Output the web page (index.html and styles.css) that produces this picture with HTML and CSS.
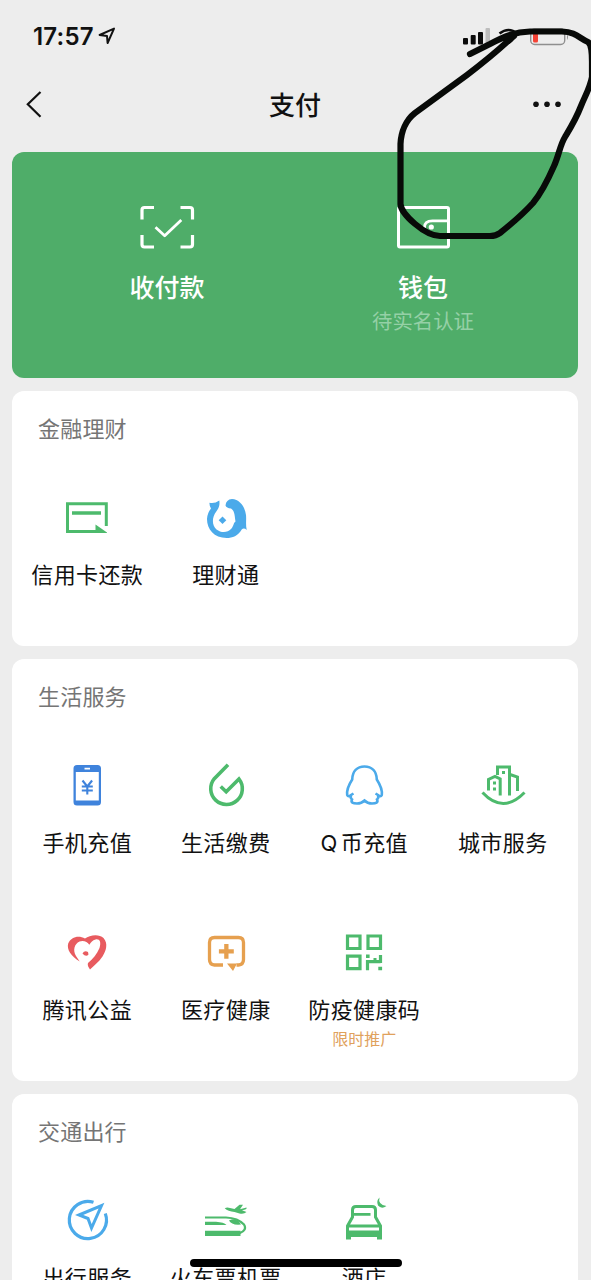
FILE: index.html
```html
<!DOCTYPE html>
<html lang="zh-CN">
<head>
<meta charset="utf-8">
<title>支付</title>
<link rel="stylesheet" href="styles.css">
</head>
<body>
<div class="screen">
  <header class="status">
    <div class="clock">17:57
      <svg class="locate" width="18" height="18" viewBox="0 0 18 18"><path d="M1.600 8 16 1.600 9.600 16 9 9z"/></svg>
    </div>
    <svg class="system" width="112" height="24" viewBox="0 0 112 24">
      <g fill="#0b0b0b"><rect x="3" y="13" width="5" height="6.500" rx="1"/><rect x="10.700" y="10" width="5" height="9.500" rx="1"/><rect x="18" y="7" width="5" height="12.500" rx="1"/></g>
      <rect x="25.500" y="3" width="4.500" height="16.500" rx="1" fill="#bdbdbd"/>
      <g fill="none" stroke="#0b0b0b" stroke-width="2.600"><path d="M39.500 8.500q9-7 18 0M43 13q6-5 12 0"/></g>
      <path d="m49.500 19-3.500-3.500q4-3 7.500 0z"/>
      <rect x="70.700" y="4" width="34" height="15.500" rx="4" fill="none" stroke="#8f8f8f" stroke-width="1.400"/>
      <rect x="73" y="6.500" width="5" height="11" rx="1.500" fill="#f44336"/>
      <path d="M107 9q2 3 0 6z" fill="#8f8f8f"/>
    </svg>
  </header>
  <nav class="nav">
    <svg width="40" height="40" viewBox="0 0 40 40"><path d="M27.500 7 14.800 19.200 27.500 31.700" fill="none" stroke="#111" stroke-width="2.200"/></svg>
    <h1 class="nav-title">支付</h1>
    <svg width="40" height="40" viewBox="0 0 40 40" fill="#111"><circle cx="9" cy="19.300" r="2.800"/><circle cx="20" cy="19.300" r="2.800"/><circle cx="31" cy="19.300" r="2.800"/></svg>
  </nav>

  <main class="content">
    <section class="pay">
      <div class="pay-item">
        <svg width="60" height="50" viewBox="0 0 60 50" fill="none" stroke="#fff" stroke-width="3.200">
          <path d="M5 17.500V8q0-2.500 2.500-2.500H17M43.500 5.500H53q2.500 0 2.500 2.500v9.500M55.500 33v9.500q0 2.500-2.500 2.500h-9.500M17 45H7.500Q5 45 5 42.500V33"/>
          <path d="m18.500 25.300 9.200 8.500L44.300 18" stroke-linejoin="round" stroke-width="2.800"/>
        </svg>
        <div class="pay-label">收付款</div>
      </div>
      <div class="pay-item">
        <svg width="60" height="50" viewBox="0 0 60 50" fill="none" stroke="#fff" stroke-width="3">
          <rect x="5.500" y="5.500" width="50" height="39.500" rx="1.500"/>
          <path d="M55 18.800H39.500q-8 0-8 6.500t8 7h15" stroke-width="2.800"/><circle cx="38.300" cy="25" r="2.600" fill="#fff" stroke="none"/>
        </svg>
        <div class="pay-label">钱包</div>
        <div class="pay-note">待实名认证</div>
      </div>
    </section>

    <section class="card">
      <h2 class="card-title">金融理财</h2>
      <div class="grid">
        <div class="tile">
          <svg class="icon green" viewBox="0 0 60 60">
            <path class="line" d="M49.300 37V14.800H10.500v27.700h30" stroke-width="3"/>
            <path d="M15 22.200h29v3.600H15zM38.500 35.500 50 43.500v.5H38.500z"/>
          </svg>
          <div class="label">信用卡还款</div>
        </div>
        <div class="tile">
          <svg class="icon sky" viewBox="0 0 60 60">
            <path d="M13.500 13.800Q18.500 15 23.300 11.500C24 16 22.800 19 20.300 22.500C15.500 29 16 36 20.500 40.500C25 44 31.500 44 35 40C38 37 37 34.500 39.500 32.500C38.500 25 38.500 22 35 19.500Q30.500 19 29.500 16.500Q30 10.500 36 10C44 10.500 49 18 50 26C50.500 31 49.500 35 50.700 41Q48 38.500 45.700 40.500C42 47 36.500 49 30.700 49C18 49 11 40 11 30Q11.300 24 15 19.500Q13.300 17 13.500 13.800z"/>
            <path d="m26.500 27.500 3.800 3.800-3.800 3.800-3.800-3.800z"/>
          </svg>
          <div class="label">理财通</div>
        </div>
      </div>
    </section>

    <section class="card services">
      <h2 class="card-title">生活服务</h2>
      <div class="grid">
        <div class="tile">
          <svg class="icon blue" viewBox="0 1 60 60">
            <path fill-rule="evenodd" d="M20 9h20.500q3.500 0 3.500 3.500V46q0 3.500-3.500 3.500H20q-3.500 0-3.500-3.500V12.500Q16.500 9 20 9zm-1.200 7v28.500h23V16zm8.700-4.200v1.700h5.500v-1.700z"/>
            <path class="line" d="m25.500 24.500 4.800 6 4.800-6M30.300 31v7.500M24.800 30.500h11M24.800 34.500h11" stroke-width="2.100"/>
          </svg>
          <div class="label">手机充值</div>
        </div>
        <div class="tile">
          <svg class="icon green" viewBox="0 1 60 60">
            <path class="line" d="M32 8.800 18.300 22.700A15.800 15.800 0 1 0 43 23L30.200 35.700 24.700 30.500" stroke-width="3.600"/>
          </svg>
          <div class="label">生活缴费</div>
        </div>
        <div class="tile">
          <svg class="icon sky" viewBox="0 1 60 60">
            <path class="line" d="M30.500 10.500C23 10.500 18.500 15.500 18.200 23.500C14 30 12.500 34 13.200 39Q14.200 41.500 17 39L19.500 37.500M17 39Q16 42 18 43.500C16.500 46.500 19 47.500 23 47.500Q27.500 47.500 30.500 44.500Q33.500 47.500 38 47.500C42 47.500 44.500 46.500 43 43.500Q45 42 44 39M41.500 37.500L44 39Q46.800 41.500 47.800 39C48.500 34 47 30 42.800 23.500C42.500 15.500 38 10.500 30.500 10.500" stroke-width="2.600"/>
          </svg>
          <div class="label">Q<span class="gap"></span>币充值</div>
        </div>
        <div class="tile">
          <svg class="icon green" viewBox="0 1 60 60">
            <path class="line" d="M9.500 36.500q20.500 22 42 0" stroke-width="3"/>
            <path class="line" d="M15.500 34.500V23.500l6.500-3 5.200 2.500v16.500M24.500 19v-8h12V39.500M37 18.500l7.500 2.500V35" stroke-width="3"/>
            <path d="M20 25.500h3v3h-3zm0 6h3v3h-3zM29 15h3v3h-3z"/>
          </svg>
          <div class="label">城市服务</div>
        </div>
        <div class="tile">
          <svg class="icon red" viewBox="0 2 60 60">
            <path d="M22.700 39.500C14 34 9.500 27.500 11.200 21.500C14 14.500 22 13 28 16.500C32.500 13 42 11.500 46.500 16C51.500 21.500 49 29 45.500 34.500C41.500 40.500 37.500 43 33 47.500Q30 43.500 31 41C36 37 40 32 42.500 26C44.500 20 42.500 16.500 38.500 17.500C35.500 18 34 20.500 32.300 22.700C30.500 19.500 26 18 22.500 19.500C17.500 22 15.500 28 19 34z"/>
            <path d="M25.500 31.500q2-3.500 5.500-1.500l.5 2.500q-2.500 3-6-1z"/>
          </svg>
          <div class="label">腾讯公益</div>
        </div>
        <div class="tile">
          <svg class="icon orange" viewBox="0 2 60 60">
            <path class="line" d="M27 43H18.500q-5-.5-5-5.500V20.500q0-5 5-5h24q5 0 5 5v17q0 5-5 5.500h-2" stroke-width="3.300"/>
            <path d="M31 41.500h10l-4 7.500zM28.200 22h4.300v5.300h5.300v4.200h-5.300v5.300h-4.300v-5.300h-5.300v-4.200h5.300z"/>
          </svg>
          <div class="label">医疗健康</div>
        </div>
        <div class="tile">
          <svg class="icon green" viewBox="0 2 60 60">
            <path class="line" d="M13.500 14H26v12.500H13.500zM34 14h12.500v12.500H34zM13.500 34.200H26v12.500H13.500zM33.500 48.300v-8.600h13M46.500 33v8" stroke-width="3.200"/>
            <path d="M32 32.600h3.600V36H32zM39.500 36h3v5h-3zM44.300 44.700h3.800v3.600h-3.800z"/>
          </svg>
          <div class="label">防疫健康码</div>
          <div class="note">限时推广</div>
        </div>
      </div>
    </section>

    <section class="card">
      <h2 class="card-title">交通出行</h2>
      <div class="grid">
        <div class="tile">
          <svg class="icon sky" viewBox="0 2 60 60">
            <path class="line" d="M36.500 12.300A18.600 18.600 0 1 0 48.300 23.500" stroke-width="3.200"/>
            <path class="line" d="m22 25 22.500-9.500L34.500 38 31 28.500z" stroke-width="3"/>
          </svg>
          <div class="label">出行服务</div>
        </div>
        <div class="tile">
          <svg class="icon green" viewBox="0 2 60 60">
            <path class="line" d="M9 27.500H30Q42 28 48 34.500Q51.500 40 43.500 43.300" stroke-width="2.200"/>
            <path d="M9 31.700h11q8 .5 10.500 3.300H9zM9 40.700h35.500V46H9zM33 30.500q5-2.500 9.500.5l2.500 3.500q-9.500 1-12-4zM28.700 18.300Q31 16.800 34 18L38.500 19 43.500 14.800H47L44 19.200 50.500 17.500Q51.500 19.500 46 20.300L50.500 22Q48 24.500 43.500 23.500L38.500 22Q32 21.500 28.700 18.300z"/>
          </svg>
          <div class="label">火车票机票</div>
        </div>
        <div class="tile">
          <svg class="icon green" viewBox="0 2 60 60">
            <path class="line" d="M13.500 42v-6l5-9v-7q0-3.500 3.500-3.500h16q3.500 0 3.500 3.500v7l5 9v6M15 36h30" stroke-width="3"/>
            <path d="M20 23h16.500v2.700H20zM12 40.500h36V49.500h-5V47H17v2.500h-5zM45.500 7.500q-2 7 7 8.500-5 3.500-8.500-.5-2-5 1.500-8z"/>
          </svg>
          <div class="label">酒店</div>
        </div>
      </div>
    </section>
  </main>

  <div class="home-bar"></div>
  <svg class="scribble" width="591" height="260" viewBox="0 0 591 260">
    <path d="M470 54 490 44C505 36 515 32 530 31.500L562 31.500C576 32 579 38 588 42Q592 45 592 62V77C590 88 585 96 581 106C576 119 571 127 565 137C560 145 559 155 554 166C547 182 542 192 533 203C524 213 510 225 500 233Q496 236 490 236H440C425 236 401 214 400.500 204V144C401 132 406 120 415 113L467 75C484 62 496 52 507 42L514 36"/>
  </svg>
</div>
</body>
</html>
```
FILE: styles.css
```css
* { box-sizing: border-box; }
body {
  margin: 0;
  background: #ededed;
  color: #111;
  font-family: Inter, "Noto Sans CJK SC", sans-serif;
}
svg { display: block; flex: none; }
.screen {
  position: relative;
  width: 591px;
  height: 1280px;
  overflow: hidden;
}
.status {
  display: flex;
  justify-content: space-between;
  height: 75px;
  padding: 25px 19px 0 33px;
}
.clock {
  display: flex;
  gap: 4px;
  height: 24px;
  line-height: 24px;
  font-size: 24px;
  font-weight: 600;
  letter-spacing: .2px;
}
.locate {
  margin-top: 2px;
  fill: none;
  stroke: #111;
  stroke-width: 2;
  stroke-linejoin: round;
}
.nav {
  display: flex;
  align-items: center;
  justify-content: space-between;
  height: 60px;
  padding: 0 24px 0 13px;
}
.nav-title {
  margin: 0;
  padding: 1px 0 0 10px;
  font-size: 26px;
  font-weight: 500;
  line-height: 40px;
}
.content {
  display: flex;
  flex-direction: column;
  gap: 13px;
  padding: 16.5px 13px 0 12px;
}
.pay {
  display: grid;
  grid-template-columns: 256px 256px;
  justify-content: center;
  height: 226.5px;
  padding-top: 50px;
  border-radius: 12px;
  background: #4fad69;
  color: #fff;
}
.pay-item {
  display: flex;
  flex-direction: column;
  align-items: center;
}
.pay-label {
  margin-top: 18px;
  font-size: 25px;
  font-weight: 500;
  line-height: 36px;
}
.pay-note {
  font-size: 20.4px;
  line-height: 32px;
  color: #95d0a6;
}
.card {
  height: 255px;
  flex: none;
  border-radius: 12px;
  background: #fff;
}
.services { height: 422px; }
.card-title {
  margin: 0;
  padding: 22px 0 0 26px;
  height: 98px;
  font-size: 22px;
  font-weight: 400;
  letter-spacing: .2px;
  line-height: 32px;
  color: #757575;
}
.grid {
  display: grid;
  grid-template-columns: repeat(4, 1fr);
  grid-auto-rows: 167px;
  padding: 0 6px;
}
.tile {
  display: flex;
  flex-direction: column;
  align-items: center;
}
.icon { width: 60px; height: 60px; fill: currentColor; }
.line { fill: none; stroke: currentColor; }
.green { color: #4dba6c; }
.sky { color: #4baaea; }
.blue { color: #3f83dc; }
.red { color: #e85b5f; }
.orange { color: #e6a04f; }
.label {
  margin-top: 10px;
  font-size: 22px;
  line-height: 32px;
  letter-spacing: .4px;
  white-space: nowrap;
}
.gap { display: inline-block; width: 3px; }
.note {
  margin-top: 2px;
  font-size: 16px;
  line-height: 22px;
  color: #e0a15c;
}
.home-bar {
  position: absolute;
  left: 190px;
  top: 1259px;
  width: 212px;
  height: 8px;
  border-radius: 4px;
  background: #000;
}
.scribble {
  position: absolute;
  left: 0;
  top: 0;
  fill: none;
  stroke: #080a08;
  stroke-width: 6.2;
  stroke-linecap: round;
  stroke-linejoin: round;
}
```
